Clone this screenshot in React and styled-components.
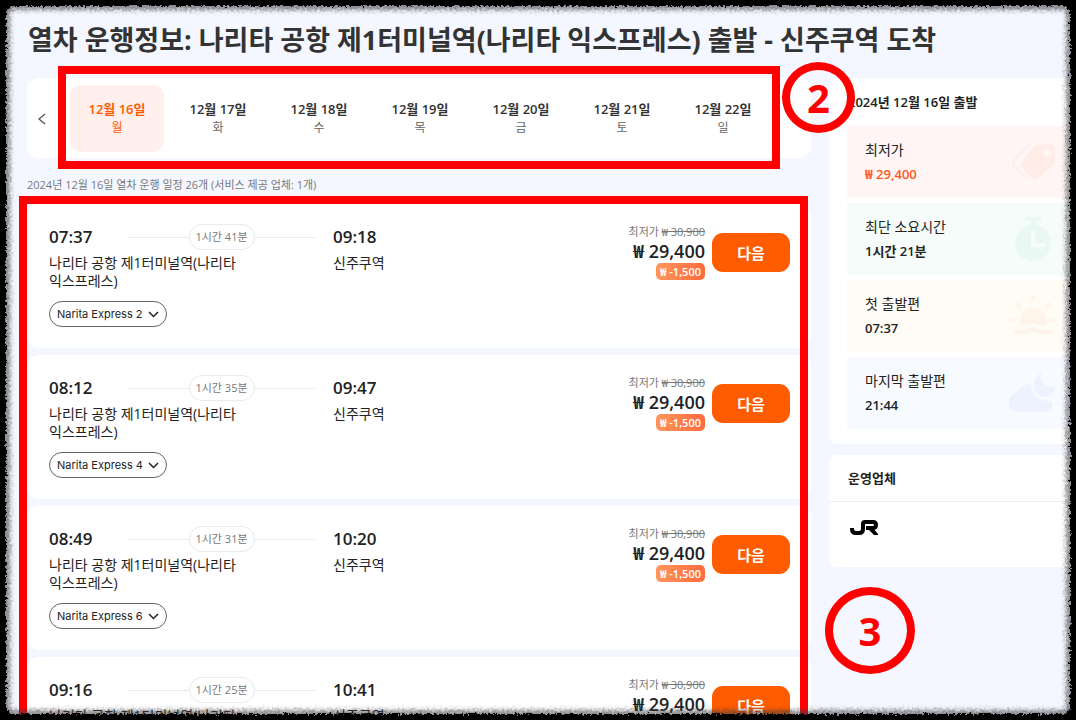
import React from "react";
import styled, { createGlobalStyle } from "styled-components";

const GlobalStyle = createGlobalStyle`
  * { box-sizing: border-box; }
  body {
    margin: 0;
    background: #000;
    color: #222;
    font-family: "Open Sans", "Noto Sans CJK KR", sans-serif;
    font-size: 14px;
    word-break: keep-all;
  }
  button { font: inherit; color: inherit; border: 0; padding: 0; background: none; cursor: pointer; }
  h1, h2, p, ul, dl, dd { margin: 0; padding: 0; }
  ul { list-style: none; }
`;

const Frame = styled.div`
  position: relative;
  height: 100vh;
  overflow: hidden;
  background: #f4f7ff;
`;

const RoughEdge = styled.div`
  position: absolute;
  inset: -20px;
  border: 26px solid #000;
  border-radius: 34px;
  box-shadow: inset 0 0 4px 4px rgba(60, 60, 65, 0.6);
  filter: url(#rough);
  pointer-events: none;
`;

const Title = styled.h1`
  padding: 20px 28px 18px;
  font-size: 27px;
  line-height: 40px;
  font-weight: 700;
  color: #333;
  white-space: nowrap;
`;

const Columns = styled.div`
  display: grid;
  grid-template-columns: minmax(0, 1fr) 247px;
  gap: 18px;
  padding-left: 27px;
`;

const Main = styled.main`
  min-width: 0;
`;

const Marked = styled.div`
  position: relative;
`;

const MarkBox = styled.div`
  position: absolute;
  inset: ${(p) => p.$inset};
  border: 8px solid #f00;
  pointer-events: none;
`;

const MarkCircle = styled.div`
  position: absolute;
  top: ${(p) => p.$top}px;
  right: ${(p) => p.$right}px;
  width: ${(p) => p.$width}px;
  height: ${(p) => p.$height}px;
  display: flex;
  align-items: center;
  justify-content: center;
  border: 8px solid #f00;
  border-radius: 50%;
  color: #f00;
  font-size: 40px;
  font-weight: 700;
  line-height: 40px;
  z-index: 1;
`;

const DateBar = styled.nav`
  display: flex;
  height: 80px;
  padding: 7px 41px 6px 0;
  border-radius: 12px;
  background: #fff;
`;

const PrevButton = styled.button`
  flex: none;
  width: 43px;
  padding-left: 10px;
  display: flex;
  align-items: center;
`;

const Dates = styled.ul`
  flex: 1;
  display: grid;
  grid-template-columns: repeat(7, 1fr);
  gap: 7px;
`;

const DateButton = styled.button`
  width: 100%;
  height: 100%;
  border-radius: 11px;
  background: ${(p) => (p.$active ? "#fff0ed" : "transparent")};
  color: ${(p) => (p.$active ? "#ff5b00" : "#333")};
  font-size: 13px;
  line-height: 18px;
  font-weight: 600;
`;

const Weekday = styled.span`
  display: block;
  font-size: 12px;
  line-height: 20px;
  font-weight: 400;
  color: ${(p) => (p.$active ? "#ff5b00" : "#666")};
`;

const Summary = styled.p`
  margin: 17px 0 9px;
  font-size: 11px;
  line-height: 20px;
  color: #777;
`;

const TrainList = styled.ul`
  display: flex;
  flex-direction: column;
  gap: 7px;
`;

const TrainCard = styled.li`
  display: flex;
  align-items: flex-start;
  gap: 7px;
  padding: 20px 21px 21px 22px;
  border-radius: 12px;
  background: #fff;
`;

const Journey = styled.div`
  flex: 1;
  display: grid;
  grid-template-columns: 284px 1fr;
  padding-top: 2px;
`;

const TimeRow = styled.div`
  display: flex;
  align-items: center;
  height: 22px;
  padding-right: 18px;
`;

const Time = styled.time`
  flex: 0 0 79px;
  font-size: 17px;
  line-height: 22px;
  font-weight: 600;
`;

const Track = styled.div`
  flex: 1;
  display: flex;
  align-items: center;
  &::before, &::after { content: ""; flex: 1; height: 1px; background: #eaeaea; }
`;

const Duration = styled.span`
  width: 66px;
  border: 1px solid #eaeaea;
  border-radius: 13px;
  font-size: 11px;
  line-height: 24px;
  text-align: center;
  color: #777;
`;

const Station = styled.p`
  width: 200px;
  margin-top: 6px;
  font-size: 14px;
  line-height: 18px;
`;

const TrainButton = styled.button`
  display: inline-flex;
  align-items: center;
  gap: 5px;
  height: 26px;
  margin-top: 11px;
  padding: 0 7px;
  border: 1px solid #666;
  border-radius: 13px;
  font-family: Inter, "Liberation Sans", sans-serif;
  font-size: 11px;
  line-height: 24px;
`;

const Price = styled.div`
  display: flex;
  flex-direction: column;
  align-items: flex-end;
`;

const OldPrice = styled.span`
  font-size: 11px;
  line-height: 16px;
  color: #777;
`;

const NewPrice = styled.strong`
  font-size: 18px;
  line-height: 22px;
  font-weight: 600;
`;

const Discount = styled.span`
  height: 17px;
  margin-top: 1px;
  padding: 0 4px;
  border-radius: 5px;
  background: linear-gradient(90deg, #ff965c, #ff6a3c);
  color: #fff;
  font-size: 11px;
  line-height: 17px;
  font-weight: 600;
`;

const NextButton = styled.button`
  width: 78px;
  height: 39px;
  margin-top: 9px;
  border-radius: 11px;
  background: #ff5b00;
  color: #fff;
  font-size: 15px;
  font-weight: 600;
`;

const Sidebar = styled.aside`
  display: flex;
  flex-direction: column;
  align-items: stretch;
  gap: 11px;
`;

const Panel = styled.section`
  border-radius: 8px 0 0 8px;
  background: #fff;
`;

const PanelTitle = styled.h2`
  padding: 0 19px;
  font-size: 13px;
  line-height: ${(p) => p.$height}px;
  font-weight: 600;
  border-bottom: ${(p) => (p.$ruled ? "1px solid #eee" : "0")};
`;

const Facts = styled.dl`
  display: flex;
  flex-direction: column;
  gap: 5px;
  padding: 0 0 15px 18px;
`;

const Fact = styled.div`
  display: flex;
  align-items: center;
  justify-content: space-between;
  height: 72px;
  padding: 0 19px 0 18px;
  background: ${(p) => p.$tint};
`;

const FactLabel = styled.dt`
  font-size: 14px;
  line-height: 25px;
`;

const FactValue = styled.dd`
  font-size: 13px;
  line-height: 25px;
  font-weight: 600;
  color: ${(p) => (p.$accent ? "#ff5722" : "#222")};
`;

const Operator = styled.div`
  height: 65px;
  padding: 17px 21px;
`;

const TagIcon = () => (
  <svg width="46" height="42" viewBox="0 0 46 42" aria-hidden="true">
    <path d="M27 4 40 3q4 0 4 4l0 12q0 3-2 5L27 37q-3 3-6 0L11 27q-3-3 0-6L23 6q1-2 4-2ZM36 8a4 4 0 1 0 .1 0Z" fill="#ffece7" fillRule="evenodd" />
    <path d="M21 4h-3L4 18q-4 4 0 8l12 11" fill="none" stroke="#ffefec" strokeWidth="2" />
  </svg>
);

const StopwatchIcon = () => (
  <svg width="42" height="44" viewBox="0 0 42 44" aria-hidden="true">
    <path d="M11 0h15v4h-5v5h-5V4h-5Z" fill="#eaf8f3" />
    <circle cx="18" cy="26" r="18" fill="#eaf8f3" />
    <path d="M18 14v14h12" fill="none" stroke="#f5fcf9" strokeWidth="4" />
  </svg>
);

const SunriseIcon = () => (
  <svg width="48" height="42" viewBox="0 0 48 42" aria-hidden="true">
    <path d="M11 30a13.500 13.500 0 1 1 26 0q-7 1-13-2-6 3-13 2Z" fill="#fff4ea" />
    <path d="M7 37h7q5 0 10-3 5 3 10 3h7M24 3v2M8 9l2 2M40 9l-2 2M3 25h2M43 25h2" fill="none" stroke="#fff4ea" strokeWidth="4" strokeLinecap="round" strokeLinejoin="round" />
  </svg>
);

const NightIcon = () => (
  <svg width="48" height="42" viewBox="0 0 48 42" aria-hidden="true">
    <path d="M10 40a10 10 0 0 1-1-20Q13 12 22 12q1 14 15 17h6q2 11-8 11Z" fill="#eef2fe" />
    <path d="M33 0q-3 8 2 12 5 4 12 3-4 11-13 10Q25 23 25 13 26 4 33 0Z" fill="#eef2fe" />
  </svg>
);

const JrLogo = () => (
  <svg width="30" height="18" viewBox="0 0 30 18" role="img" aria-label="JR">
    <path d="M2 9v1q0 4 4 4h3q4 0 4-4V5q0-2 2-2h8q3 0 3 3t-3 3h-7" fill="none" stroke="#000" strokeWidth="4" />
    <path d="M17 9h6l5 6v1h-4Z" fill="#000" />
  </svg>
);

const dates = [
  ["12월 16일", "월"], ["12월 17일", "화"], ["12월 18일", "수"], ["12월 19일", "목"],
  ["12월 20일", "금"], ["12월 21일", "토"], ["12월 22일", "일"],
];

const trains = [
  { depart: "07:37", arrive: "09:18", duration: "1시간 41분", name: "Narita Express 2" },
  { depart: "08:12", arrive: "09:47", duration: "1시간 35분", name: "Narita Express 4" },
  { depart: "08:49", arrive: "10:20", duration: "1시간 31분", name: "Narita Express 6" },
  { depart: "09:16", arrive: "10:41", duration: "1시간 25분", name: "Narita Express 8" },
];

const facts = [
  { label: "최저가", value: "₩ 29,400", tint: "#fff6f5", accent: true, Icon: TagIcon },
  { label: "최단 소요시간", value: "1시간 21분", tint: "#f5fcf9", Icon: StopwatchIcon },
  { label: "첫 출발편", value: "07:37", tint: "#fffbf5", Icon: SunriseIcon },
  { label: "마지막 출발편", value: "21:44", tint: "#f7faff", Icon: NightIcon },
];

const Train = ({ train }) => (
  <TrainCard>
    <Journey>
      <div>
        <TimeRow>
          <Time>{train.depart}</Time>
          <Track><Duration>{train.duration}</Duration></Track>
        </TimeRow>
        <Station>나리타 공항 제1터미널역(나리타 익스프레스)</Station>
        <TrainButton type="button">
          {train.name}
          <svg width="11" height="7" viewBox="0 0 11 7" aria-hidden="true">
            <path d="m1 1 4.500 4.500L10 1" fill="none" stroke="#222" strokeWidth="1.500" />
          </svg>
        </TrainButton>
      </div>
      <div>
        <TimeRow><Time>{train.arrive}</Time></TimeRow>
        <Station>신주쿠역</Station>
      </div>
    </Journey>
    <Price>
      <OldPrice>최저가 <s>₩ 30,900</s></OldPrice>
      <NewPrice>₩ 29,400</NewPrice>
      <Discount>₩ -1,500</Discount>
    </Price>
    <NextButton type="button">다음</NextButton>
  </TrainCard>
);

export default function App() {
  return (
    <Frame>
      <GlobalStyle />
      <Title>열차 운행정보: 나리타 공항 제1터미널역(나리타 익스프레스) 출발 - 신주쿠역 도착</Title>
      <Columns>
        <Main>
          <Marked>
            <DateBar aria-label="출발일">
              <PrevButton type="button" aria-label="이전">
                <svg width="10" height="14" viewBox="0 0 10 14" aria-hidden="true">
                  <path d="M8 2 2 7l6 5" fill="none" stroke="#555" strokeWidth="1.300" />
                </svg>
              </PrevButton>
              <Dates>
                {dates.map(([day, weekday], i) => (
                  <li key={day}>
                    <DateButton type="button" $active={i === 0}>
                      {day}
                      <Weekday $active={i === 0}>{weekday}</Weekday>
                    </DateButton>
                  </li>
                ))}
              </Dates>
            </DateBar>
            <MarkBox $inset="-12px 31px -11px 31px" />
            <MarkCircle $top={-16} $right={-44} $width={73} $height={71}>2</MarkCircle>
          </Marked>
          <Summary>2024년 12월 16일 열차 운행 일정 26개 (서비스 제공 업체: 1개)</Summary>
          <Marked>
            <TrainList>
              {trains.map((train) => <Train key={train.depart} train={train} />)}
            </TrainList>
            <MarkBox $inset="-8px 3px -8px -8px" />
            <MarkCircle $top={383} $right={-104} $width={90} $height={87}>3</MarkCircle>
          </Marked>
        </Main>
        <Sidebar>
          <Panel>
            <PanelTitle $height={48}>2024년 12월 16일 출발</PanelTitle>
            <Facts>
              {facts.map(({ label, value, tint, accent, Icon }) => (
                <Fact key={label} $tint={tint}>
                  <div>
                    <FactLabel>{label}</FactLabel>
                    <FactValue $accent={accent}>{value}</FactValue>
                  </div>
                  <Icon />
                </Fact>
              ))}
            </Facts>
          </Panel>
          <Panel>
            <PanelTitle $height={46} $ruled>운영업체</PanelTitle>
            <Operator><JrLogo /></Operator>
          </Panel>
        </Sidebar>
      </Columns>
      <svg width="0" height="0" aria-hidden="true">
        <filter id="rough" x="0" y="0" width="100%" height="100%">
          <feTurbulence type="fractalNoise" baseFrequency="0.400" numOctaves="3" seed="4" />
          <feDisplacementMap in="SourceGraphic" scale="6" xChannelSelector="R" yChannelSelector="G" />
        </filter>
      </svg>
      <RoughEdge />
    </Frame>
  );
}
